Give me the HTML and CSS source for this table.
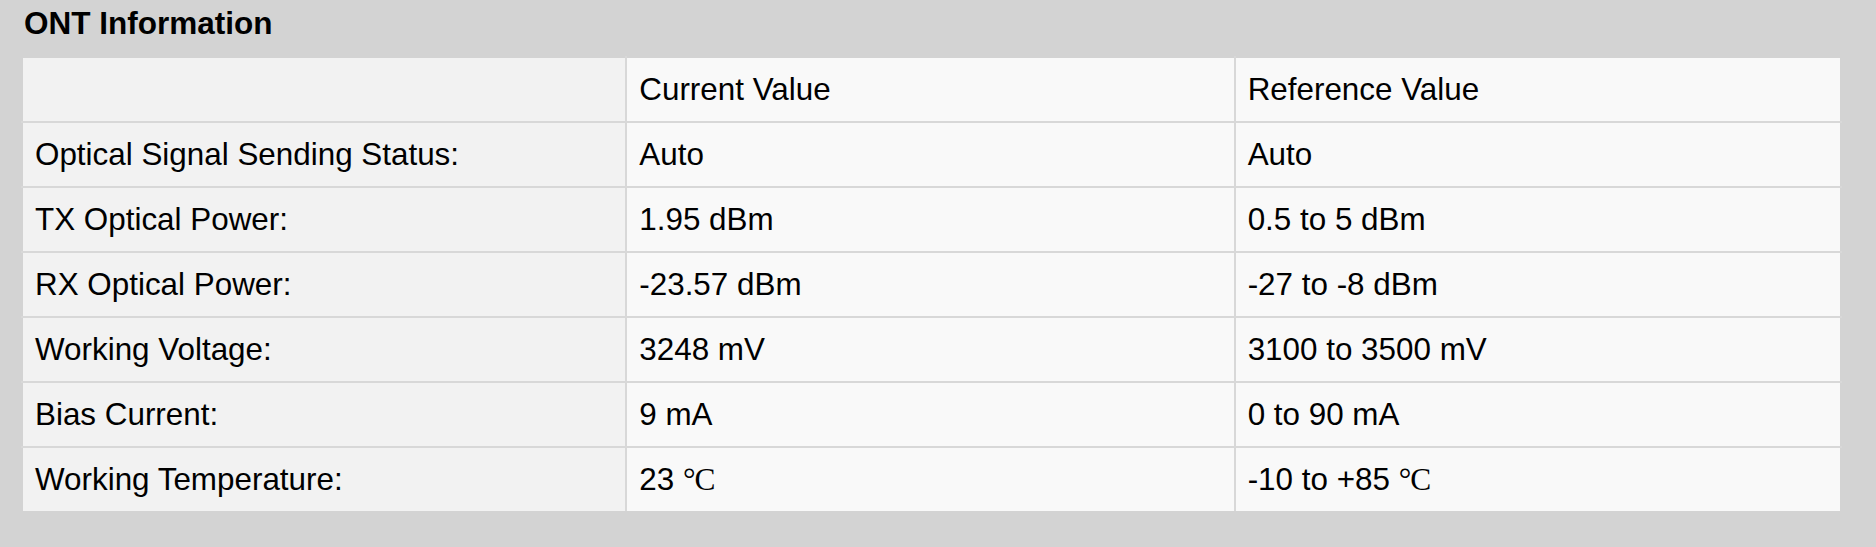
FILE: index.html
```html
<!DOCTYPE html>
<html lang="en">
<head>
<meta charset="utf-8">
<title>ONT Information</title>
<link rel="stylesheet" href="styles.css">
</head>
<body>
<div class="page">
  <div class="title">ONT Information</div>
  <table class="info">
    <colgroup><col class="c1"><col class="c2"><col class="c3"></colgroup>
    <tr><td class="label"></td><td>Current Value</td><td>Reference Value</td></tr>
    <tr><td class="label">Optical Signal Sending Status:</td><td>Auto</td><td>Auto</td></tr>
    <tr><td class="label">TX Optical Power:</td><td>1.95 dBm</td><td>0.5 to 5 dBm</td></tr>
    <tr><td class="label">RX Optical Power:</td><td>-23.57 dBm</td><td>-27 to -8 dBm</td></tr>
    <tr><td class="label">Working Voltage:</td><td>3248 mV</td><td>3100 to 3500 mV</td></tr>
    <tr><td class="label">Bias Current:</td><td>9 mA</td><td>0 to 90 mA</td></tr>
    <tr><td class="label">Working Temperature:</td><td>23 <span class="unit">°C</span></td><td>-10 to +85 <span class="unit">°C</span></td></tr>
  </table>
</div>
</body>
</html>
```
FILE: styles.css
```css
html, body {
  margin: 0;
  padding: 0;
  background: #d3d3d3;
}
body {
  font-family: "Liberation Sans", Arial, sans-serif;
  color: #000;
}
.page {
  padding: 0 34px 0 21px;
}
.title {
  font-weight: bold;
  font-size: 31.5px;
  line-height: 36px;
  padding: 5px 0 0 3px;
  margin-bottom: 15px;
}
.info {
  width: 100%;
  table-layout: fixed;
  border-collapse: collapse;
  font-size: 31.4px;
}
.info .c1 {
  width: 33.22%;
}
.info .c2 {
  width: 33.447%;
}
.info .c3 {
  width: 33.333%;
}
.info td {
  background: #f9f9f9;
  border: 2px solid #d8d8d8;
  padding: 14px 12px;
  line-height: 35px;
  white-space: nowrap;
}
.info td.label {
  background: #f2f2f2;
}
.info tr:first-child td {
  border-top-color: #d3d3d3;
}
.info td:first-child {
  border-left-color: #d3d3d3;
}
.info td:last-child {
  border-right-color: #d3d3d3;
}
.info tr:last-child td {
  border-bottom-color: #d3d3d3;
}
.unit {
  font-family: "Liberation Serif", "Times New Roman", serif;
  letter-spacing: -1px;
}
```
